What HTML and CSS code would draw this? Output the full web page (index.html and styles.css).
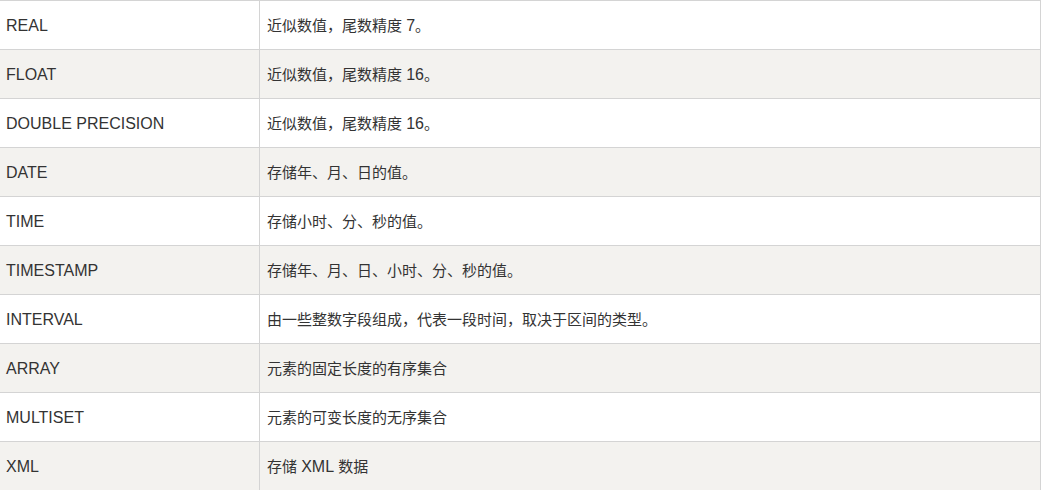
FILE: index.html
```html
<!DOCTYPE html>
<html lang="zh">
<head>
<meta charset="utf-8">
<link rel="stylesheet" href="styles.css">
</head>
<body>
<table class="types">
<tbody>
<tr><td class="name">REAL</td><td class="desc">近似数值，尾数精度 <span class="lat">7</span>。</td></tr>
<tr class="alt"><td class="name">FLOAT</td><td class="desc">近似数值，尾数精度 <span class="lat">16</span>。</td></tr>
<tr><td class="name">DOUBLE PRECISION</td><td class="desc">近似数值，尾数精度 <span class="lat">16</span>。</td></tr>
<tr class="alt"><td class="name">DATE</td><td class="desc">存储年、月、日的值。</td></tr>
<tr><td class="name">TIME</td><td class="desc">存储小时、分、秒的值。</td></tr>
<tr class="alt"><td class="name">TIMESTAMP</td><td class="desc">存储年、月、日、小时、分、秒的值。</td></tr>
<tr><td class="name">INTERVAL</td><td class="desc">由一些整数字段组成，代表一段时间，取决于区间的类型。</td></tr>
<tr class="alt"><td class="name">ARRAY</td><td class="desc">元素的固定长度的有序集合</td></tr>
<tr><td class="name">MULTISET</td><td class="desc">元素的可变长度的无序集合</td></tr>
<tr class="alt"><td class="name">XML</td><td class="desc">存储 <span class="lat">XML</span> 数据</td></tr>
</tbody>
</table>
</body>
</html>
```
FILE: styles.css
```css
html, body {
  margin: 0;
  padding: 0;
  background: #ffffff;
}
body {
  font-family: "Liberation Sans", Arial, "Noto Sans CJK SC", sans-serif;
  font-size: 16px;
  color: #333333;
}
.types {
  border-collapse: collapse;
  width: 1041px;
  table-layout: fixed;
}
.types td {
  height: 47px;
  padding: 1px 0 0 6px;
  border-top: 1px solid #d4d4d4;
  border-bottom: 1px solid #d4d4d4;
  vertical-align: middle;
  line-height: 20px;
}
.types .name {
  width: 253px;
  border-right: 1px solid #d4d4d4;
}
.types .desc {
  padding-left: 7px;
  font-size: 15px;
  border-right: 1px solid #d4d4d4;
}
.types .desc .lat {
  font-size: 16px;
}
.types tr.alt td {
  background: #f3f2ef;
}
```
